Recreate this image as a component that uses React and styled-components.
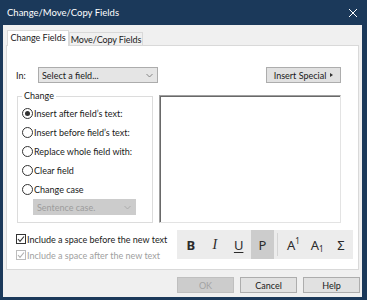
import React, { useState } from 'react'
import styled, { createGlobalStyle } from 'styled-components'

const GlobalStyle = createGlobalStyle`
  html, body {
    margin: 0;
    padding: 0;
    background: #1b395a;
  }
  body {
    font-family: Lato, 'Noto Sans', sans-serif;
    font-size: 9px;
    color: #1a1a1a;
  }
  * {
    box-sizing: border-box;
  }
`

const Window = styled.div`
  width: 367px;
  height: 300px;
  background: #1b395a;
  display: flex;
  flex-direction: column;
  padding: 0 5px 3px 3px;
`

const TitleBar = styled.div`
  height: 25px;
  flex: none;
  display: flex;
  align-items: center;
  justify-content: space-between;
  padding: 0 4px 0 4px;
  color: #ffffff;
  font-size: 9.5px;
`

const Body = styled.div`
  flex: 1;
  background: #f0f0f0;
  display: flex;
  flex-direction: column;
  padding: 4px 3px 0 3px;
`

const TabStrip = styled.div`
  height: 16px;
  display: flex;
  align-items: flex-end;
  padding-left: 1px;
`

const Tab = styled.div`
  height: ${(p) => (p.active ? '16px' : '13px')};
  width: ${(p) => p.w}px;
  display: flex;
  align-items: center;
  justify-content: center;
  white-space: nowrap;
  background: ${(p) => (p.active ? '#ffffff' : '#f0f0f0')};
  border: 1px solid #d9d9d9;
  border-bottom: none;
  margin-bottom: ${(p) => (p.active ? '-1px' : '0')};
  position: relative;
  z-index: ${(p) => (p.active ? 1 : 0)};
  padding-bottom: ${(p) => (p.active ? '2px' : '0')};
  letter-spacing: ${(p) => (p.active ? '0' : '-0.1px')};
`

const Panel = styled.div`
  height: 225px;
  background: #ffffff;
  border: 1px solid #d9d9d9;
  display: flex;
  flex-direction: column;
  padding: 0 5px 0 9px;
`

const TopRow = styled.div`
  margin: 21px 12px 0 0;
  height: 16px;
  display: flex;
  align-items: center;
`

const InLabel = styled.span`
  width: 22px;
`

const Select = styled.div`
  width: ${(p) => p.w}px;
  height: ${(p) => p.h || 16}px;
  display: flex;
  align-items: center;
  justify-content: space-between;
  padding: 0 4px 0 3px;
  background: ${(p) => (p.disabled ? '#cccccc' : '#e5e5e5')};
  border: 1px solid ${(p) => (p.disabled ? '#cccccc' : '#acacac')};
  color: ${(p) => (p.disabled ? '#9c9c9c' : '#1a1a1a')};
  margin-left: ${(p) => p.ml || 0}px;
`

const Spacer = styled.div`
  flex: 1;
`

const Button = styled.div`
  width: ${(p) => p.w}px;
  height: 16px;
  display: flex;
  align-items: center;
  justify-content: center;
  gap: 4px;
  background: ${(p) => (p.disabled ? '#cccccc' : '#e1e1e1')};
  border: 1px solid ${(p) => (p.disabled ? '#bfbfbf' : '#adadad')};
  color: ${(p) => (p.disabled ? '#a3a3a3' : '#1a1a1a')};
`

const Arrow = styled.span`
  width: 0;
  height: 0;
  border-top: 2.5px solid transparent;
  border-bottom: 2.5px solid transparent;
  border-left: 3px solid #333;
`

const MiddleRow = styled.div`
  margin: 7px 12px 0 1px;
  display: flex;
  gap: 6px;
  align-items: flex-start;
`

const Group = styled.fieldset`
  width: 136px;
  height: 133px;
  margin: 0;
  padding: 2px 0 0 4px;
  border: 1px solid #dcdcdc;
  min-width: 0;
`

const Legend = styled.legend`
  padding: 0 2px;
  line-height: 12px;
`

const OptionRow = styled.label`
  height: 19px;
  display: flex;
  align-items: center;
  gap: 1px;
  color: ${(p) => (p.disabled ? '#a0a0a0' : '#1a1a1a')};
`

const Radio = styled.span`
  width: 11px;
  height: 11px;
  border-radius: 50%;
  border: 1px solid #333333;
  background: #ffffff;
  display: flex;
  align-items: center;
  justify-content: center;

  &::after {
    content: '';
    width: 5px;
    height: 5px;
    border-radius: 50%;
    background: ${(p) => (p.checked ? '#333333' : 'transparent')};
  }
`

const TextBox = styled.div`
  flex: 1;
  height: 128px;
  margin-top: 5px;
  background: #ffffff;
  border-top: 1px solid #a0a0a0;
  border-left: 1px solid #a0a0a0;
  border-right: 1px solid #e3e3e3;
  border-bottom: 1px solid #e3e3e3;
  box-shadow: inset 1px 1px 0 #696969;
`

const BottomRow = styled.div`
  margin-top: 7px;
  display: flex;
  align-items: flex-start;
`

const CheckList = styled.div`
  flex: 1;
  display: flex;
  flex-direction: column;
  padding-top: 1px;
`

const CheckRow = styled.label`
  height: 16px;
  display: flex;
  align-items: center;
  gap: 1px;
  color: ${(p) => (p.disabled ? '#a0a0a0' : '#1a1a1a')};
`

const Box = styled.span`
  width: 10px;
  height: 10px;
  border: 1px solid ${(p) => (p.disabled ? '#bcbcbc' : '#333333')};
  background: #ffffff;
  display: flex;
  align-items: center;
  justify-content: center;
`

const Toolbar = styled.div`
  width: 176px;
  height: 29px;
  background: #ececec;
  display: flex;
  padding-left: 2px;
`

const ToolButton = styled.div`
  width: 24px;
  height: 100%;
  display: flex;
  align-items: center;
  justify-content: center;
  background: ${(p) => (p.pressed ? '#cccccc' : 'transparent')};
  color: #2b2b2b;
  font-family: 'Noto Sans', sans-serif;
  font-size: 13px;
`

const Sep = styled.div`
  width: 1px;
  margin: 3px 3px;
  background: #d4d4d4;
`

const Bold = styled.span`
  font-weight: 700;
`

const Ital = styled.span`
  font-family: 'Liberation Serif', serif;
  font-style: italic;
  font-size: 14px;
`

const Under = styled.span`
  text-decoration: underline;
  text-underline-offset: 2px;
  text-decoration-thickness: 1px;
`

const Small = styled.span`
  font-size: 8px;
  position: relative;
  top: ${(p) => (p.sub ? '4px' : '-4px')};
`

const ButtonRow = styled.div`
  display: flex;
  justify-content: flex-end;
  gap: 6px;
  padding: 7px 0 0 0;
  margin-right: -1px;
`

function Chevron({ color }) {
  return (
    <svg width="7" height="5" viewBox="0 0 7 5">
      <polyline points="0.5,1 3.5,4 6.5,1" fill="none" stroke={color} strokeWidth="0.9" />
    </svg>
  )
}

function CloseIcon() {
  return (
    <svg width="10" height="10" viewBox="0 0 10 10">
      <path d="M1 1 L9 9 M9 1 L1 9" stroke="#ffffff" strokeWidth="1" />
    </svg>
  )
}

function Check({ color }) {
  return (
    <svg width="8" height="8" viewBox="0 0 8 8">
      <polyline points="1,4 3,6.3 7,1.5" fill="none" stroke={color} strokeWidth="1.1" />
    </svg>
  )
}

const options = [
  'Insert after field\u2019s text:',
  'Insert before field\u2019s text:',
  'Replace whole field with:',
  'Clear field',
  'Change case',
]

export default function App() {
  const [choice, setChoice] = useState(0)

  return (
    <>
      <GlobalStyle />
      <Window>
        <TitleBar>
          <span>Change/Move/Copy Fields</span>
          <CloseIcon />
        </TitleBar>
        <Body>
          <TabStrip>
            <Tab active w={62}>Change Fields</Tab>
            <Tab w={74}>Move/Copy Fields</Tab>
          </TabStrip>
          <Panel>
            <TopRow>
              <InLabel>In:</InLabel>
              <Select w={120}>
                <span>Select a field...</span>
                <Chevron color="#7a7a7a" />
              </Select>
              <Spacer />
              <Button w={75}>
                Insert Special
                <Arrow />
              </Button>
            </TopRow>
            <MiddleRow>
              <Group>
                <Legend>Change</Legend>
                {options.map((label, i) => (
                  <OptionRow key={label} onClick={() => setChoice(i)}>
                    <Radio checked={choice === i} />
                    {label}
                  </OptionRow>
                ))}
                <Select w={103} disabled ml={11}>
                  <span>Sentence case.</span>
                  <Chevron color="#a8a8a8" />
                </Select>
              </Group>
              <TextBox />
            </MiddleRow>
            <BottomRow>
              <CheckList>
                <CheckRow>
                  <Box>
                    <Check color="#333333" />
                  </Box>
                  Include a space before the new text
                </CheckRow>
                <CheckRow disabled>
                  <Box disabled>
                    <Check color="#b0b0b0" />
                  </Box>
                  Include a space after the new text
                </CheckRow>
              </CheckList>
              <Toolbar>
                <ToolButton><Bold>B</Bold></ToolButton>
                <ToolButton><Ital>I</Ital></ToolButton>
                <ToolButton><Under>U</Under></ToolButton>
                <ToolButton pressed>P</ToolButton>
                <Sep />
                <ToolButton>A<Small>1</Small></ToolButton>
                <ToolButton>A<Small sub>1</Small></ToolButton>
                <ToolButton>Σ</ToolButton>
              </Toolbar>
            </BottomRow>
          </Panel>
          <ButtonRow>
            <Button w={57} disabled>OK</Button>
            <Button w={57}>Cancel</Button>
            <Button w={57}>Help</Button>
          </ButtonRow>
        </Body>
      </Window>
    </>
  )
}
